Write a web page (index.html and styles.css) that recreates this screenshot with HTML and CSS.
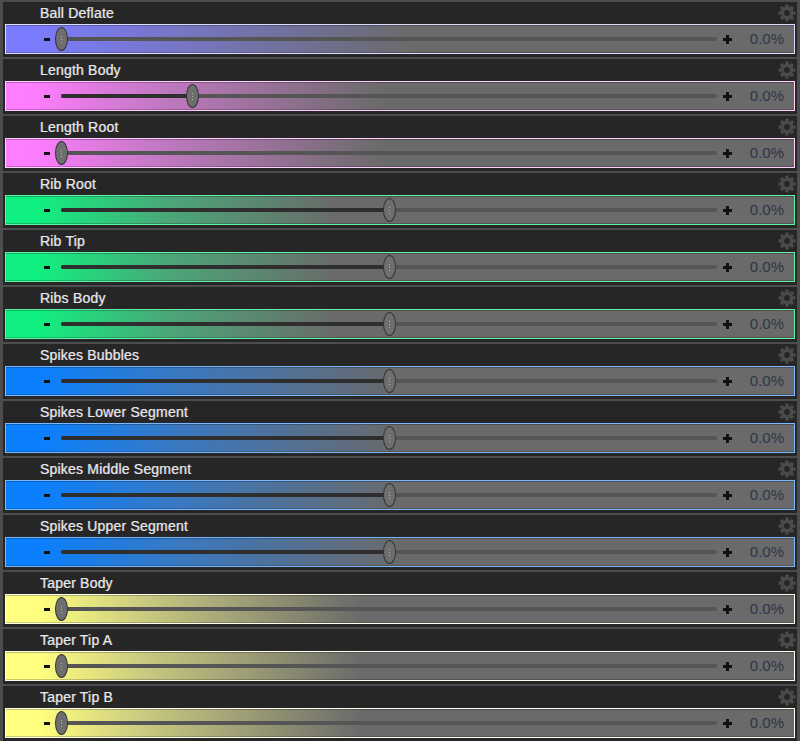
FILE: index.html
```html
<!DOCTYPE html>
<html>
<head>
    <title>Morphs</title>
    <link rel="stylesheet" href="styles.css">
</head>
<body>
    <svg width="0" height="0" style="position:absolute">
        <symbol id="gear" viewBox="0 0 16 16">
            <g fill="#4a4a4a">
                <circle cx="8" cy="8" r="5.6"/>
                <rect x="6.4" y="0.4" width="3.2" height="15.2" rx="0.6"/>
                <rect x="6.4" y="0.4" width="3.2" height="15.2" rx="0.6" transform="rotate(45 8 8)"/>
                <rect x="6.4" y="0.4" width="3.2" height="15.2" rx="0.6" transform="rotate(90 8 8)"/>
                <rect x="6.4" y="0.4" width="3.2" height="15.2" rx="0.6" transform="rotate(135 8 8)"/>
            </g>
            <circle cx="8" cy="8" r="2.6" fill="#262626"/>
        </symbol>
    </svg>

    <div class="list" id="list"></div>

    <script>
        const morphs = [
            ['Ball Deflate', 'ball', 0],
            ['Length Body', 'length', 20],
            ['Length Root', 'length', 0],
            ['Rib Root', 'rib', 50],
            ['Rib Tip', 'rib', 50],
            ['Ribs Body', 'rib', 50],
            ['Spikes Bubbles', 'spikes', 50],
            ['Spikes Lower Segment', 'spikes', 50],
            ['Spikes Middle Segment', 'spikes', 50],
            ['Spikes Upper Segment', 'spikes', 50],
            ['Taper Body', 'taper', 0],
            ['Taper Tip A', 'taper', 0],
            ['Taper Tip B', 'taper', 0]
        ];

        const list = document.getElementById('list');
        morphs.forEach(m => {
            const row = document.createElement('div');
            row.className = 'row c-' + m[1];
            row.innerHTML =
                '<div class="head"><span class="label">' + m[0] + '</span>' +
                '<svg class="gear"><use href="#gear"/></svg></div>' +
                '<div class="bar">' +
                    '<span class="minus"></span>' +
                    '<div class="track">' +
                        '<div class="fill" style="width:' + m[2] + '%"></div>' +
                        '<span class="knob" style="left:' + m[2] + '%"><i></i><i></i><i></i></span>' +
                    '</div>' +
                    '<span class="plus"></span>' +
                    '<span class="value">0.0%</span>' +
                '</div>';
            list.appendChild(row);
        });
    </script>
</body>
</html>
```

FILE: styles.css
```css
body {
    margin: 0;
    background-color: #4d4d4d;
    font-family: "Liberation Sans", Arial, sans-serif;
}
.list {
    padding: 2px 3px 0;
    display: flex;
    flex-direction: column;
    gap: 2px;
}
.row {
    height: 55px;
    background-color: #262626;
}
.head {
    height: 22px;
    display: flex;
    align-items: center;
    justify-content: space-between;
}
.label {
    margin-left: 37px;
    font-size: 14px;
    line-height: 22px;
    color: #e8e8e8;
    letter-spacing: 0.2px;
    text-shadow: -0.5px 0 0 rgba(120, 170, 255, 0.55), 0.5px 0 0 rgba(230, 160, 60, 0.45);
}
.gear {
    width: 18px;
    height: 18px;
    margin-right: 1px;
    margin-top: -1px;
}
.bar {
    height: 28px;
    margin: 0 2px;
    border: 1px solid #ddd;
    display: flex;
    align-items: center;
    box-shadow: inset 0 1px 0 rgba(0, 0, 0, 0.25), inset 0 -1px 0 rgba(0, 0, 0, 0.2);
}
.minus {
    width: 6px;
    height: 3px;
    margin-left: 38px;
    background-color: #111;
}
.track {
    position: relative;
    flex: 1;
    height: 4px;
    margin-left: 11px;
    border-radius: 2px;
    background-color: #555;
}
.fill {
    height: 4px;
    min-width: 4px;
    border-radius: 2px;
    background-color: #2e2e2e;
}
.knob {
    position: absolute;
    top: -10px;
    width: 11px;
    height: 22px;
    margin-left: -6px;
    border-radius: 50%;
    background-color: #6e6e6e;
    border: 1px solid #333;
    display: flex;
    flex-direction: column;
    align-items: center;
    justify-content: center;
    gap: 2px;
}
.knob i {
    width: 1px;
    height: 1px;
    background-color: #b4b4b4;
}
.plus {
    position: relative;
    width: 9px;
    height: 9px;
    margin-left: 6px;
}
.plus::before, .plus::after {
    content: "";
    position: absolute;
    background-color: #111;
}
.plus::before {
    left: 0;
    top: 3px;
    width: 9px;
    height: 3px;
}
.plus::after {
    left: 3px;
    top: 0;
    width: 3px;
    height: 9px;
}
.value {
    width: 52px;
    margin-right: 10px;
    margin-top: -2px;
    text-align: right;
    font-size: 15px;
    color: #2f3647;
}

.c-ball .bar {
    border-color: #dcdcff;
    background: linear-gradient(90deg, #7b7bff 0%, #7b7bff 3%, #7676c4 22%, #6a6a6a 52%);
}
.c-length .bar {
    border-color: #ffd0ff;
    background: linear-gradient(90deg, #ff7dff 0%, #ff7dff 3%, #c078c0 20%, #6a6a6a 48%);
}
.c-rib .bar {
    border-color: #5ff2a8;
    background: linear-gradient(90deg, #10f080 0%, #10f080 4%, #4aa878 20%, #6a6a6a 42%);
}
.c-spikes .bar {
    border-color: #7ab8ff;
    background: linear-gradient(90deg, #0a80ff 0%, #0a80ff 4%, #3a78c0 22%, #6a6a6a 50%);
}
.c-taper .bar {
    border-color: #fffff0;
    background: linear-gradient(90deg, #ffff80 0%, #ffff80 4%, #c8c880 18%, #6a6a6a 45%);
}
```
